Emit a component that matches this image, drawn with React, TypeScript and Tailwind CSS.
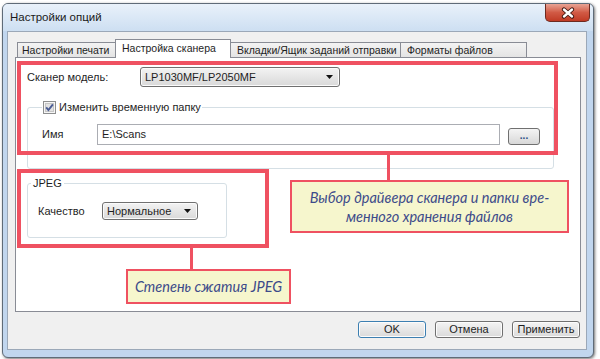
import React from "react";

function Arrow() {
  return (
    <svg width="7" height="4" viewBox="0 0 7 4">
      <path d="M0 0h7L3.5 4z" fill="#111" />
    </svg>
  );
}

function Combo({ value, className }: { value: string; className: string }) {
  return (
    <div
      className={`flex items-center justify-between rounded-[3px] border border-[#707070] bg-linear-to-b from-[#f3f3f3] to-[#d9d9d9] pl-[4px] pr-[6px] shadow-[inset_0_0_0_1px_#fbfbfb] ${className}`}
    >
      <span>{value}</span>
      <Arrow />
    </div>
  );
}

function CheckBox() {
  return (
    <svg width="13" height="13" viewBox="0 0 13 13">
      <rect x="0.5" y="0.5" width="12" height="12" fill="#f6f6f6" stroke="#8e8f8f" />
      <rect x="2.5" y="2.5" width="8" height="8" fill="#e2e2e2" stroke="#c6c6c6" />
      <path d="M3.2 6.4 L5.4 9 L9.9 3.4" fill="none" stroke="#4a5c94" strokeWidth="1.9" />
    </svg>
  );
}

function Button({ label, def }: { label: string; def?: boolean }) {
  return (
    <div
      className={`flex h-[17px] w-[68px] items-center justify-center rounded-[3px] border bg-linear-to-b from-[#f4f4f4] to-[#dadada] shadow-[inset_0_0_0_1px_#fcfcfc] ${
        def ? "border-[#3c7fb1]" : "border-[#707070]"
      }`}
    >
      {label}
    </div>
  );
}

const tabBase =
  "-ml-px flex h-[15px] items-start overflow-hidden whitespace-nowrap border border-b-0 border-[#898c95] bg-linear-to-b from-[#f3f3f3] to-[#e4e4e4] pt-[1px] text-[10.5px] leading-[13px]";

export default function App() {
  return (
    <div className="relative h-[359px] w-[600px] overflow-hidden bg-white pl-[2px] pt-[3px] font-['Liberation_Sans',Arial,sans-serif] text-[11px] text-[#1e1e1e]">
      {/* window */}
      <div className="flex h-[355px] w-[592px] flex-col rounded-[6px] border border-[#5f6b78] bg-[#c1d6ee] shadow-[1px_1px_3px_rgba(0,0,0,0.55)]">
        <div className="flex h-[27px] justify-between rounded-t-[5px] bg-linear-to-b from-[#e9f1fa] to-[#cddff2]">
          <span className="pl-[7px] pt-[6px] text-[11.5px] leading-[14px] text-[#1a1a1a]">
            Настройки опций
          </span>
          <div className="mr-[3px] flex h-[18px] w-[45px] items-center justify-center rounded-b-[5px] border border-t-0 border-[#6d2a20] bg-linear-to-b from-[#e8a394] via-[#d15a45] to-[#c03a24]">
            <svg width="14" height="12" viewBox="0 0 14 12">
              <path d="M3 2.5 L11 9.5 M11 2.5 L3 9.5" stroke="#3c1610" strokeWidth="4.2" strokeLinecap="round" />
              <path d="M3 2.5 L11 9.5 M11 2.5 L3 9.5" stroke="#fff" strokeWidth="2.4" strokeLinecap="round" />
            </svg>
          </div>
        </div>

        {/* client */}
        <div className="ml-[4px] flex h-[319px] w-[580px] flex-col border border-[#9ba8b8] bg-[#f0f0f0] pl-[7px] pr-[5px] pt-[7px]">
          <div className="ml-[2px] flex h-[18px] items-end">
            <div className={`${tabBase} ml-0 w-[99px] pl-[4px]`}>Настройки печати</div>
            <div className="relative z-10 -mb-px -ml-px h-[19px] w-[116px] whitespace-nowrap border border-b-0 border-[#898c95] bg-white pl-[6px] pt-[2px] text-[10.5px] leading-[13px]">
              Настройка сканера
            </div>
            <div className={`${tabBase} w-[171px] pl-[6px]`}>Вкладки/Ящик заданий отправки</div>
            <div className={`${tabBase} w-[127px] pl-[6px]`}>Форматы файлов</div>
          </div>

          <div className="flex h-[255px] w-[566px] flex-col border border-[#898c95] bg-white">
            <div className="ml-[11px] mt-[9px] flex h-[20px] items-center">
              <span className="w-[113px]">Сканер модель:</span>
              <Combo value="LP1030MF/LP2050MF" className="h-[20px] w-[200px]" />
            </div>

            <fieldset className="ml-[11px] mt-[13px] w-[527px] rounded-[3px] border border-[#d5dfe5]">
              <legend className="ml-[14px] flex h-[14px] items-center gap-[3px] px-[1px]">
                <CheckBox />
                <span>Изменить временную папку</span>
              </legend>
              <div className="flex h-[41px] items-start pl-[14px] pt-[10px]">
                <span className="flex h-[21px] w-[55px] items-center">Имя</span>
                <div className="flex h-[21px] w-[403px] items-center border border-[#abadb3] bg-white pl-[4px]">
                  E:\Scans
                </div>
                <div className="ml-[8px] mt-[4px] flex h-[17px] w-[32px] items-center justify-center rounded-[3px] border border-[#707070] bg-linear-to-b from-[#f4f4f4] to-[#d8d8d8] pb-[3px] text-[10px] font-bold text-[#2b4f85]">
                  ...
                </div>
              </div>
              <div className="h-[13px]" />
            </fieldset>

            <fieldset className="ml-[11px] mt-[7px] w-[200px] rounded-[3px] border border-[#d5dfe5]">
              <legend className="ml-[3px] flex h-[14px] items-center px-[2px]">JPEG</legend>
              <div className="flex items-center pb-[17px] pl-[10px] pt-[12px]">
                <span className="w-[64px]">Качество</span>
                <Combo value="Нормальное" className="h-[18px] w-[96px]" />
              </div>
            </fieldset>
          </div>

          <div className="mt-[9px] flex justify-end gap-[9px] pr-[1px]">
            <Button label="OK" def />
            <Button label="Отмена" />
            <Button label="Применить" />
          </div>
        </div>
      </div>

      {/* annotations */}
      <div className="absolute left-[17px] top-[61px] h-[94px] w-[541px] border-[4px] border-[#ef5161]" />
      <div className="absolute left-[387px] top-[155px] h-[25px] w-[3px] bg-[#ef5161]" />
      <div className="absolute left-[290px] top-[180px] flex h-[53px] w-[279px] flex-col items-center justify-center border-2 border-[#ef5161] bg-[#f6f6cd] font-['Lato',sans-serif] text-[14.5px] italic leading-[19px] text-[#3d4b8a]">
        <span>Выбор драйвера сканера и папки вре-</span>
        <span>менного хранения файлов</span>
      </div>

      <div className="absolute left-[17px] top-[169px] h-[79px] w-[252px] border-[4px] border-[#ef5161]" />
      <div className="absolute left-[190px] top-[248px] h-[21px] w-[3px] bg-[#ef5161]" />
      <div className="absolute left-[126px] top-[269px] flex h-[35px] w-[165px] items-center justify-center border-2 border-[#ef5161] bg-[#f6f6cd] font-['Lato',sans-serif] text-[14.5px] italic text-[#3d4b8a]">
        Степень сжатия JPEG
      </div>
    </div>
  );
}
